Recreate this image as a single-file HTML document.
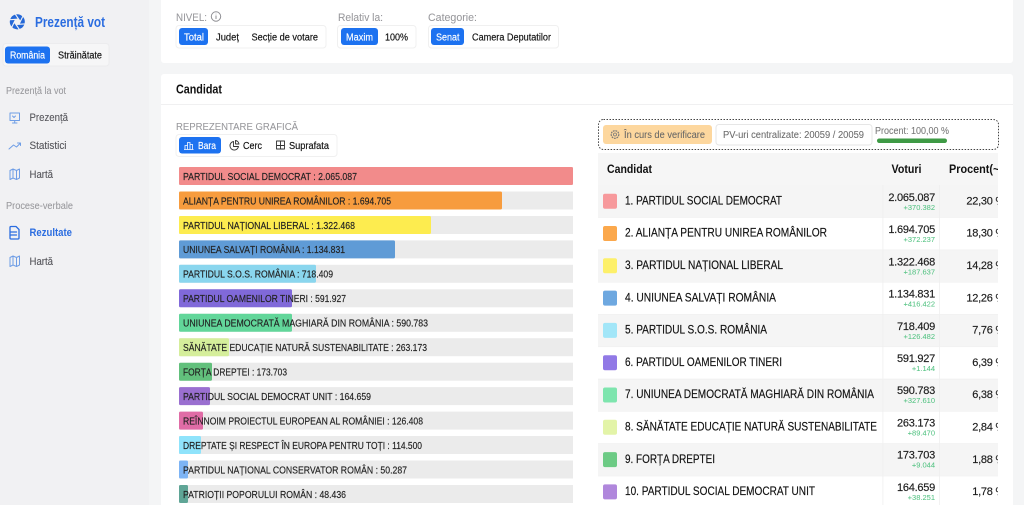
<!DOCTYPE html>
<html lang="ro"><head><meta charset="utf-8"><title>Prezență vot</title>
<style>
html,body{margin:0;padding:0;width:1024px;height:505px;overflow:hidden;background:#f4f5f6}
svg{display:block}
body>svg{filter:blur(.25px)}
text{font-family:"Liberation Sans",sans-serif;font-size:10px;color:#111;fill:currentColor;stroke:currentColor;stroke-width:.16}
.g{color:#98989c;stroke-width:.06}.m{color:#55555a;stroke-width:.1}.w{color:#fff}.b{font-weight:700;stroke-width:0}
.c text{font-size:10.500px;color:#222}
.n text{font-size:11.500px;color:#111}
.v text{font-size:11px;color:#1c1c1c;text-anchor:end;letter-spacing:-.25px}
.d text{font-size:7.500px;color:#55c383;text-anchor:end;stroke-width:.03}
.ic{fill:none;stroke:#6f9ee6;stroke-width:1;stroke-linecap:round;stroke-linejoin:round}
.bk{fill:none;stroke:#333;stroke-width:.9;stroke-linejoin:round;stroke-linecap:round}
.box{fill:#fff;stroke:#f0f0f0}
.f{font-size:10px}
</style></head><body>
<svg width="1024" height="505" viewBox="0 0 1024 505" xmlns="http://www.w3.org/2000/svg">
<rect width="1024" height="505" fill="#f4f5f6"/>
<rect width="149" height="505" fill="#f1f1f3"/>
<!-- logo -->
<g fill="#2468d8" transform="translate(17.300 21.800)">
<path id="bl" d="M-1.200 -7.400A7.500 7.500 0 0 1 5 -5.600L2.900 -1.400Z"/>
<path d="M-1.200 -7.400A7.500 7.500 0 0 1 5 -5.600L2.900 -1.400Z" transform="rotate(60)"/>
<path d="M-1.200 -7.400A7.500 7.500 0 0 1 5 -5.600L2.900 -1.400Z" transform="rotate(120)"/>
<path d="M-1.200 -7.400A7.500 7.500 0 0 1 5 -5.600L2.900 -1.400Z" transform="rotate(180)"/>
<path d="M-1.200 -7.400A7.500 7.500 0 0 1 5 -5.600L2.900 -1.400Z" transform="rotate(240)"/>
<path d="M-1.200 -7.400A7.500 7.500 0 0 1 5 -5.600L2.900 -1.400Z" transform="rotate(300)"/>
</g>
<text x="35" y="27" class="b" textLength="70" lengthAdjust="spacingAndGlyphs" style="font-size:14.500px;color:#2b6de0">Prezență vot</text>
<rect x="3" y="43.500" width="106" height="22.500" rx="3" fill="#f6f6f7" stroke="#ececee"/>
<rect x="5" y="46.500" width="45" height="17" rx="3" fill="#1d72f0"/>
<text x="10" y="58.500" class="w f" textLength="35" lengthAdjust="spacingAndGlyphs">România</text>
<text x="58" y="58.500" class="f" textLength="44" lengthAdjust="spacingAndGlyphs">Străinătate</text>
<text x="6" y="94" class="g f" textLength="60" lengthAdjust="spacingAndGlyphs">Prezență la vot</text>
<text x="29.500" y="121" class="m" style="font-size:11px" textLength="38.500" lengthAdjust="spacingAndGlyphs">Prezență</text>
<text x="29.500" y="149" class="m" style="font-size:11px" textLength="37" lengthAdjust="spacingAndGlyphs">Statistici</text>
<text x="29.500" y="178" class="m" style="font-size:11px" textLength="23.500" lengthAdjust="spacingAndGlyphs">Hartă</text>
<text x="6" y="209" class="g f" textLength="67" lengthAdjust="spacingAndGlyphs">Procese-verbale</text>
<text x="29.500" y="236" class="b" style="font-size:11px;color:#2b6de0" textLength="42.500" lengthAdjust="spacingAndGlyphs">Rezultate</text>
<text x="29.500" y="265" class="m" style="font-size:11px" textLength="23.500" lengthAdjust="spacingAndGlyphs">Hartă</text>
<!-- sidebar icons -->
<g class="ic">
<path d="M10 113h9.500v7.500H10z M12.500 123h4.500 M14.700 120.500v2.500 M12.500 116l1.500 1.500 1.500-1.500"/>
<path d="M9 149l4.500-4 3 2 4-4 M17.500 143h3v2.500"/>
<path d="M10 170.500l3-1.500 3.500 1.500 3-1.500v9l-3 1.500-3.500-1.500-3 1.500z M13 169v9 M16.500 170.500v9"/>
<path d="M10 261.500l3-1.500 3.500 1.500 3-1.500v9l-3 1.500-3.500-1.500-3 1.500z M13 260v9 M16.500 261.500v9" transform="translate(0,-4.500)" style="display:none"/>
<path d="M10 257.500l3-1.500 3.500 1.500 3-1.500v9l-3 1.500-3.500-1.500-3 1.500z M13 256v9 M16.500 257.500v9"/>
<path d="M11 226.500h5l3 3v8.500a1 1 0 0 1-1 1h-7a1 1 0 0 1-1-1v-10.500a1 1 0 0 1 1-1z M11 232h5.500 M11 235h5.500" style="stroke:#2b6de0;stroke-width:1.300"/>
</g>
<!-- top card -->
<rect x="161" y="-4" width="852" height="67" rx="3" fill="#fff"/>
<text x="176" y="21" class="g" style="font-size:11px" textLength="31" lengthAdjust="spacingAndGlyphs">NIVEL:</text>
<circle cx="216" cy="16.500" r="4.700" fill="none" stroke="#8f8f93"/><path d="M216 15.500v3.500M216 13.800v.5" stroke="#8f8f93" fill="none"/>
<text x="338" y="21" class="g" style="font-size:11px" textLength="45" lengthAdjust="spacingAndGlyphs">Relativ la:</text>
<text x="428" y="21" class="g" style="font-size:11px" textLength="49" lengthAdjust="spacingAndGlyphs">Categorie:</text>
<rect x="176" y="25.500" width="150" height="22.500" rx="3" class="box"/>
<rect x="337.500" y="25.500" width="78.500" height="22.500" rx="3" class="box"/>
<rect x="428.500" y="25.500" width="130" height="22.500" rx="3" class="box"/>
<rect x="179" y="28" width="29" height="17" rx="3" fill="#1d72f0"/>
<rect x="341" y="28" width="37" height="17" rx="3" fill="#1d72f0"/>
<rect x="431" y="28" width="33" height="17" rx="3" fill="#1d72f0"/>
<text x="184" y="40.500" class="w f" textLength="20" lengthAdjust="spacingAndGlyphs">Total</text>
<text x="216" y="40.500" class="f" textLength="23" lengthAdjust="spacingAndGlyphs">Județ</text>
<text x="251.500" y="40.500" class="f" textLength="66.500" lengthAdjust="spacingAndGlyphs">Secție de votare</text>
<text x="346" y="40.500" class="w f" textLength="27" lengthAdjust="spacingAndGlyphs">Maxim</text>
<text x="385" y="40.500" class="f" textLength="23" lengthAdjust="spacingAndGlyphs">100%</text>
<text x="436" y="40.500" class="w f" textLength="23.500" lengthAdjust="spacingAndGlyphs">Senat</text>
<text x="472" y="40.500" class="f" textLength="79" lengthAdjust="spacingAndGlyphs">Camera Deputatilor</text>
<!-- main card -->
<rect x="161" y="74" width="852" height="440" rx="3" fill="#fff"/>
<rect x="161" y="104" width="852" height="1" fill="#f0f0f1"/>
<text x="176" y="93.500" class="b" style="font-size:12.500px" textLength="46" lengthAdjust="spacingAndGlyphs">Candidat</text>
<text x="176" y="130" class="g" style="font-size:10.500px" textLength="122" lengthAdjust="spacingAndGlyphs">REPREZENTARE GRAFICĂ</text>
<rect x="176" y="134.500" width="161" height="22" rx="3" class="box"/>
<rect x="179" y="137" width="42" height="16.500" rx="3" fill="#1d72f0"/>
<path d="M185 149.500v-4h2.500v4M187.500 149.500v-7h2.500v7M190 149.500v-5h2.500v5M184 149.500h9.500" fill="none" stroke="#fff" stroke-width=".8"/>
<text x="198" y="149" class="w f" textLength="18" lengthAdjust="spacingAndGlyphs">Bara</text>
<path d="M233.500 141.500a4.300 4.300 0 1 0 5 5h-5z M235.500 140.500a4 4 0 0 1 3.500 3.500h-3.500z" class="bk"/>
<text x="243" y="149" class="f" textLength="19" lengthAdjust="spacingAndGlyphs">Cerc</text>
<path d="M276.500 141h8v8h-8z M280.500 141v4.500h4 M280.500 145.500v3.500 M276.500 145.500h4" class="bk"/>
<text x="289" y="149" class="f" textLength="40" lengthAdjust="spacingAndGlyphs">Suprafata</text>
<!-- bars -->
<g fill="#ebebeb">
<rect x="179" y="167" width="394" height="18"/><rect x="179" y="191.500" width="394" height="18"/><rect x="179" y="216" width="394" height="18"/><rect x="179" y="240.400" width="394" height="18"/><rect x="179" y="264.800" width="394" height="18"/><rect x="179" y="289.300" width="394" height="18"/><rect x="179" y="313.800" width="394" height="18"/><rect x="179" y="338.200" width="394" height="18"/><rect x="179" y="362.700" width="394" height="18"/><rect x="179" y="387.100" width="394" height="18"/><rect x="179" y="411.600" width="394" height="18"/><rect x="179" y="436" width="394" height="18"/><rect x="179" y="460.500" width="394" height="18"/><rect x="179" y="485" width="394" height="18"/>
</g>
<rect x="179" y="167" width="394" height="18" rx="1.500" fill="#f28b8b"/>
<rect x="179" y="191.500" width="323" height="18" rx="1.500" fill="#f79c3e"/>
<rect x="179" y="216" width="252" height="18" rx="1.500" fill="#fdec4f"/>
<rect x="179" y="240.400" width="216" height="18" rx="1.500" fill="#5f9bd6"/>
<rect x="179" y="264.800" width="137" height="18" rx="1.500" fill="#8ad6ee"/>
<rect x="179" y="289.300" width="113" height="18" rx="1.500" fill="#8069d9"/>
<rect x="179" y="313.800" width="113" height="18" rx="1.500" fill="#62d69a"/>
<rect x="179" y="338.200" width="50" height="18" rx="1.500" fill="#d5ee9b"/>
<rect x="179" y="362.700" width="33" height="18" rx="1.500" fill="#62c07c"/>
<rect x="179" y="387.100" width="31" height="18" rx="1.500" fill="#9a6fd0"/>
<rect x="179" y="411.600" width="24" height="18" rx="1.500" fill="#e06ca6"/>
<rect x="179" y="436" width="22" height="18" rx="1.500" fill="#8fe3fb"/>
<rect x="179" y="460.500" width="9" height="18" rx="1.500" fill="#7db4f5"/>
<rect x="179" y="485" width="9" height="18" rx="1.500" fill="#5fa596"/>
<g class="c">
<text x="183" y="179.800" textLength="174" lengthAdjust="spacingAndGlyphs">PARTIDUL SOCIAL DEMOCRAT : 2.065.087</text>
<text x="183" y="204.300" textLength="208" lengthAdjust="spacingAndGlyphs">ALIANȚA PENTRU UNIREA ROMÂNILOR : 1.694.705</text>
<text x="183" y="228.800" textLength="172" lengthAdjust="spacingAndGlyphs">PARTIDUL NAȚIONAL LIBERAL : 1.322.468</text>
<text x="183" y="253.200" textLength="162" lengthAdjust="spacingAndGlyphs">UNIUNEA SALVAȚI ROMÂNIA : 1.134.831</text>
<text x="183" y="277.600" textLength="150" lengthAdjust="spacingAndGlyphs">PARTIDUL S.O.S. ROMÂNIA : 718.409</text>
<text x="183" y="302.100" textLength="163" lengthAdjust="spacingAndGlyphs">PARTIDUL OAMENILOR TINERI : 591.927</text>
<text x="183" y="326.600" textLength="245" lengthAdjust="spacingAndGlyphs">UNIUNEA DEMOCRATĂ MAGHIARĂ DIN ROMÂNIA : 590.783</text>
<text x="183" y="351" textLength="244" lengthAdjust="spacingAndGlyphs">SĂNĂTATE EDUCAȚIE NATURĂ SUSTENABILITATE : 263.173</text>
<text x="183" y="375.500" textLength="104" lengthAdjust="spacingAndGlyphs">FORȚA DREPTEI : 173.703</text>
<text x="183" y="399.900" textLength="188" lengthAdjust="spacingAndGlyphs">PARTIDUL SOCIAL DEMOCRAT UNIT : 164.659</text>
<text x="183" y="424.400" textLength="240" lengthAdjust="spacingAndGlyphs">REÎNNOIM PROIECTUL EUROPEAN AL ROMÂNIEI : 126.408</text>
<text x="183" y="448.800" textLength="239" lengthAdjust="spacingAndGlyphs">DREPTATE ȘI RESPECT ÎN EUROPA PENTRU TOȚI : 114.500</text>
<text x="183" y="473.300" textLength="224" lengthAdjust="spacingAndGlyphs">PARTIDUL NAȚIONAL CONSERVATOR ROMÂN : 50.287</text>
<text x="183" y="497.800" textLength="163" lengthAdjust="spacingAndGlyphs">PATRIOȚII POPORULUI ROMÂN : 48.436</text>
</g>
<!-- status -->
<rect x="598.500" y="119.500" width="400" height="30" rx="5" fill="#fff" stroke="#444" stroke-dasharray="1.500 1.500"/>
<rect x="603" y="125" width="109" height="19" rx="3" fill="#fdd79e"/>
<circle cx="615" cy="134.500" r="3.800" fill="none" stroke="#777" stroke-dasharray="1.800 .8" stroke-width="1.200"/><circle cx="615" cy="134.500" r="1.500" fill="none" stroke="#777" stroke-width=".8"/>
<text x="624" y="138" class="f" style="color:#666;stroke-width:.06" textLength="81" lengthAdjust="spacingAndGlyphs">În curs de verificare</text>
<rect x="716" y="124.500" width="156" height="20.500" rx="3" fill="#fff" stroke="#e6e6e6"/>
<text x="723" y="138" class="f" style="color:#6a6a6a;stroke-width:.06" textLength="141" lengthAdjust="spacingAndGlyphs">PV-uri centralizate: 20059 / 20059</text>
<text x="875" y="134" class="f" style="color:#777;stroke-width:.06" textLength="74" lengthAdjust="spacingAndGlyphs">Procent: 100,00 %</text>
<rect x="877" y="138.500" width="70" height="4.500" rx="2.200" fill="#3e9a45"/>
<!-- table -->
<svg x="598" y="153" width="400" height="352" viewBox="598 153 400 352">
<rect x="598" y="153" width="400" height="32" fill="#f6f6f6"/>
<rect x="598" y="185" width="400" height="320" fill="#fff"/>
<g fill="#f5f5f5">
<rect x="598" y="185" width="400" height="32.300"/><rect x="598" y="249.600" width="400" height="32.300"/><rect x="598" y="314.200" width="400" height="32.300"/><rect x="598" y="378.800" width="400" height="32.300"/><rect x="598" y="443.400" width="400" height="32.300"/>
</g>
<g fill="#efefef"><rect x="882.500" y="185" width=".8" height="320"/><rect x="939" y="185" width=".8" height="320"/>
<rect x="598" y="217.300" width="400" height=".6"/><rect x="598" y="249.600" width="400" height=".6"/><rect x="598" y="281.900" width="400" height=".6"/><rect x="598" y="314.200" width="400" height=".6"/><rect x="598" y="346.500" width="400" height=".6"/><rect x="598" y="378.800" width="400" height=".6"/><rect x="598" y="411.100" width="400" height=".6"/><rect x="598" y="443.400" width="400" height=".6"/><rect x="598" y="475.700" width="400" height=".6"/></g>
<text x="607" y="172.800" class="b" style="font-size:11.500px" textLength="45" lengthAdjust="spacingAndGlyphs">Candidat</text>
<text x="891.500" y="172.800" class="b" style="font-size:11.500px" textLength="30" lengthAdjust="spacingAndGlyphs">Voturi</text>
<text x="949" y="172.800" class="b" style="font-size:11.500px" textLength="54" lengthAdjust="spacingAndGlyphs">Procent(~)</text>
<rect x="603" y="193.700" width="14" height="15" rx="2" fill="#f7999c"/>
<rect x="603" y="226" width="14" height="15" rx="2" fill="#fba84c"/>
<rect x="603" y="258.300" width="14" height="15" rx="2" fill="#fdf06a"/>
<rect x="603" y="290.600" width="14" height="15" rx="2" fill="#6ea8e0"/>
<rect x="603" y="322.900" width="14" height="15" rx="2" fill="#a2e6f8"/>
<rect x="603" y="355.200" width="14" height="15" rx="2" fill="#9179e6"/>
<rect x="603" y="387.500" width="14" height="15" rx="2" fill="#7ee5ae"/>
<rect x="603" y="419.800" width="14" height="15" rx="2" fill="#e3f4a8"/>
<rect x="603" y="452.100" width="14" height="15" rx="2" fill="#6dcb85"/>
<rect x="603" y="484.400" width="14" height="15" rx="2" fill="#b087dc"/>
<g class="n">
<text x="625" y="204.500" textLength="157" lengthAdjust="spacingAndGlyphs">1. PARTIDUL SOCIAL DEMOCRAT</text>
<text x="625" y="236.700" textLength="202" lengthAdjust="spacingAndGlyphs">2. ALIANȚA PENTRU UNIREA ROMÂNILOR</text>
<text x="625" y="269" textLength="158" lengthAdjust="spacingAndGlyphs">3. PARTIDUL NAȚIONAL LIBERAL</text>
<text x="625" y="301.300" textLength="151" lengthAdjust="spacingAndGlyphs">4. UNIUNEA SALVAȚI ROMÂNIA</text>
<text x="625" y="333.600" textLength="142" lengthAdjust="spacingAndGlyphs">5. PARTIDUL S.O.S. ROMÂNIA</text>
<text x="625" y="365.900" textLength="157" lengthAdjust="spacingAndGlyphs">6. PARTIDUL OAMENILOR TINERI</text>
<text x="625" y="398.200" textLength="249" lengthAdjust="spacingAndGlyphs">7. UNIUNEA DEMOCRATĂ MAGHIARĂ DIN ROMÂNIA</text>
<text x="625" y="430.500" textLength="252" lengthAdjust="spacingAndGlyphs">8. SĂNĂTATE EDUCAȚIE NATURĂ SUSTENABILITATE</text>
<text x="625" y="462.800" textLength="90" lengthAdjust="spacingAndGlyphs">9. FORȚA DREPTEI</text>
<text x="625" y="495.100" textLength="190" lengthAdjust="spacingAndGlyphs">10. PARTIDUL SOCIAL DEMOCRAT UNIT</text>
</g>
<g class="v">
<text x="935" y="201">2.065.087</text><text x="935" y="233">1.694.705</text><text x="935" y="265.500">1.322.468</text><text x="935" y="297.500">1.134.831</text><text x="935" y="330">718.409</text><text x="935" y="362">591.927</text><text x="935" y="394">590.783</text><text x="935" y="426.500">263.173</text><text x="935" y="458.500">173.703</text><text x="935" y="491">164.659</text>
</g>
<g class="d">
<text x="935" y="210">+370.382</text><text x="935" y="242">+372.237</text><text x="935" y="274.500">+187.637</text><text x="935" y="306.500">+416.422</text><text x="935" y="339">+126.482</text><text x="935" y="371">+1.144</text><text x="935" y="403">+327.610</text><text x="935" y="435.500">+89.470</text><text x="935" y="467.500">+9.044</text><text x="935" y="500">+38.251</text>
</g>
<g class="v">
<text x="1005" y="204.500">22,30 %</text><text x="1005" y="236.700">18,30 %</text><text x="1005" y="269">14,28 %</text><text x="1005" y="301.300">12,26 %</text><text x="1005" y="333.600">7,76 %</text><text x="1005" y="365.900">6,39 %</text><text x="1005" y="398.200">6,38 %</text><text x="1005" y="430.500">2,84 %</text><text x="1005" y="462.800">1,88 %</text><text x="1005" y="495.100">1,78 %</text>
</g>
</svg>
</svg>
</body></html>
